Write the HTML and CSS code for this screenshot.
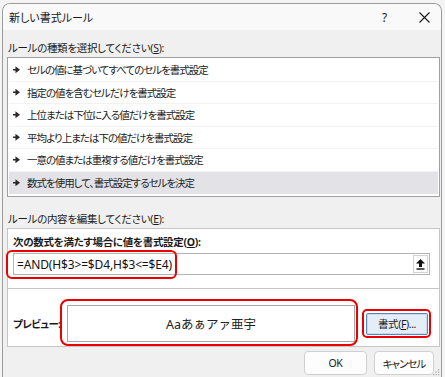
FILE: index.html
```html
<!DOCTYPE html>
<html>
<head>
    <title>新しい書式ルール</title>
    <link rel="stylesheet" href="styles.css">
</head>
<body>
    <div class="dialog">
        <div class="titlebar">
            <span class="title">新しい書式ルール</span>
            <span class="help">?</span>
            <span class="close">
                <svg width="11" height="11" viewBox="0 0 11 11"><path d="M0.5 0.5L10.5 10.5M10.5 0.5L0.5 10.5" stroke="#1a1a1a" stroke-width="1.1" fill="none"/></svg>
            </span>
        </div>
        <div class="content">
            <div class="label">ルールの種類を選択してください(<u>S</u>):</div>
            <div class="listbox">
                <div class="row"><span class="arrow"></span>セルの値に基づいてすべてのセルを書式設定</div>
                <div class="row"><span class="arrow"></span>指定の値を含むセルだけを書式設定</div>
                <div class="row"><span class="arrow"></span>上位または下位に入る値だけを書式設定</div>
                <div class="row"><span class="arrow"></span>平均より上または下の値だけを書式設定</div>
                <div class="row"><span class="arrow"></span>一意の値または重複する値だけを書式設定</div>
                <div class="row selected"><span class="arrow"></span>数式を使用して、書式設定するセルを決定</div>
            </div>
            <div class="label second">ルールの内容を編集してください(<u>E</u>):</div>
            <div class="group">
                <div class="formula-part">
                    <div class="label bold">次の数式を満たす場合に値を書式設定(<u>O</u>):</div>
                    <div class="formula">
                        <span class="formula-text">=AND(H$3&gt;=$D4,H$3&lt;=$E4)</span>
                        <span class="collapse">
                            <svg width="9" height="11" viewBox="0 0 9 11"><path d="M4.5 0L9 4.5H6V8H3V4.5H0Z" fill="#111"/><rect x="0.5" y="9.3" width="8" height="1.4" fill="#111"/></svg>
                        </span>
                    </div>
                </div>
                <div class="preview-part">
                    <div class="label bold preview-label">プレビュー:</div>
                    <div class="preview">Aaあぁアァ亜宇</div>
                    <div class="btn format-btn">書式(<u>F</u>)...</div>
                </div>
            </div>
            <div class="footer">
                <div class="btn ok-btn">OK</div>
                <div class="btn cancel-btn">キャンセル</div>
            </div>
        </div>
        <div class="mark mark-formula"></div>
        <div class="mark mark-preview"></div>
        <div class="mark mark-format"></div>
        <div class="grip">
            <svg width="7" height="7" viewBox="0 0 7 7"><g fill="#a8a8a8"><rect x="5" y="0" width="1.2" height="1.2"/><rect x="2.5" y="2.5" width="1.2" height="1.2"/><rect x="5" y="2.5" width="1.2" height="1.2"/><rect x="0" y="5" width="1.2" height="1.2"/><rect x="2.5" y="5" width="1.2" height="1.2"/><rect x="5" y="5" width="1.2" height="1.2"/></g></svg>
        </div>
    </div>
</body>
</html>
```

FILE: styles.css
```css
body {
    margin: 0;
    background: #f4f4f4;
    font-family: "Noto Sans", "Noto Sans CJK JP", sans-serif;
    font-size: 10.5px;
    color: #1a1a1a;
    font-feature-settings: "palt";
}
.dialog {
    position: relative;
    box-sizing: border-box;
    margin: 3px 0 0 2px;
    width: 440px;
    height: 374px;
    border: 1px solid #9c9c9c;
    border-bottom: none;
    border-radius: 8px 8px 0 0;
    background: #f0f0f0;
    overflow: hidden;
}
.titlebar {
    display: flex;
    align-items: center;
    height: 26px;
    padding-left: 6px;
    background: #f9f9f9;
}
.title {
    flex-grow: 1;
    font-size: 11px;
}
.help {
    width: 12px;
    font-size: 12px;
    margin-right: 25px;
}
.close {
    display: flex;
    margin-right: 11px;
}
.content {
    padding: 0 1px 0 4px;
}
.label {
    height: 14px;
    line-height: 14px;
    white-space: nowrap;
    letter-spacing: -0.3px;
}
.content > .label {
    margin-top: 11px;
    margin-bottom: 2px;
    padding-left: 1px;
}
.content > .label.second {
    margin-top: 15px;
}
.bold {
    font-weight: bold;
}
.listbox {
    border: 1px solid #a0a0a0;
    background: #fff;
    padding: 1px 1px 2px 1px;
}
.row {
    box-sizing: border-box;
    display: flex;
    align-items: center;
    height: 22.5px;
    padding-left: 4px;
    border-bottom: 1px solid #f2f2f2;
    letter-spacing: -1px;
    color: #222;
}
.row.selected {
    background: #e3e3e7;
    border-bottom: none;
}
.arrow {
    width: 7px;
    height: 7px;
    margin-right: 7px;
    background: #2a2a2a;
    clip-path: polygon(0 40%, 35% 40%, 35% 0, 100% 50%, 35% 100%, 35% 60%, 0 60%);
}
.group {
    border: 1px solid #c6c6c6;
    background: #fff;
}
.formula-part {
    padding: 6px 9px 13px 5px;
    border-bottom: 1px solid #c6c6c6;
}
.formula-part .label {
    margin-bottom: 4px;
}
.formula {
    box-sizing: border-box;
    display: flex;
    align-items: center;
    height: 22px;
    border: 1px solid #b4b4b4;
    padding: 0 1px 0 3px;
}
.formula-text {
    flex-grow: 1;
    font-size: 12px;
    letter-spacing: -0.15px;
    color: #111;
}
.collapse {
    box-sizing: border-box;
    display: flex;
    align-items: center;
    justify-content: center;
    width: 15px;
    height: 18px;
    border: 1px solid #d2d2d2;
    background: #fdfdfd;
}
.preview-part {
    display: flex;
    align-items: center;
    padding: 16px 0 4px 5px;
}
.preview-label {
    width: 54px;
    letter-spacing: -0.6px;
}
.preview {
    box-sizing: border-box;
    width: 288px;
    height: 37px;
    border: 1px solid #a8a8a8;
    display: flex;
    align-items: center;
    justify-content: center;
    font-size: 12.5px;
    font-feature-settings: normal;
    color: #222;
}
.btn {
    box-sizing: border-box;
    display: flex;
    align-items: center;
    justify-content: center;
    border: 1px solid #d0d0d0;
    border-radius: 4px;
    background: #fdfdfd;
    letter-spacing: -0.4px;
}
.format-btn {
    margin-left: 11px;
    width: 62px;
    height: 22px;
    border: 1px solid #5b86b8;
    border-radius: 2px;
    background: #e5eef8;
    box-shadow: inset 0 0 0 1px #c9dcf0;
}
.footer {
    display: flex;
    justify-content: flex-end;
    gap: 7px;
    margin-top: 4px;
    padding-right: 6px;
}
.ok-btn {
    width: 63px;
    height: 24px;
}
.cancel-btn {
    width: 60px;
    height: 24px;
    letter-spacing: -1px;
}
.mark {
    position: absolute;
    box-sizing: border-box;
    border: 2px solid #ea0000;
}
.mark-formula {
    left: 3px;
    top: 246px;
    width: 171px;
    height: 29px;
    border-radius: 6px;
}
.mark-preview {
    left: 57px;
    top: 295px;
    width: 298px;
    height: 47px;
    border-radius: 8px;
}
.mark-format {
    left: 359px;
    top: 305px;
    width: 69px;
    height: 29px;
    border-radius: 5px;
}
.grip {
    position: absolute;
    right: 1px;
    bottom: 1px;
    display: flex;
}
```
